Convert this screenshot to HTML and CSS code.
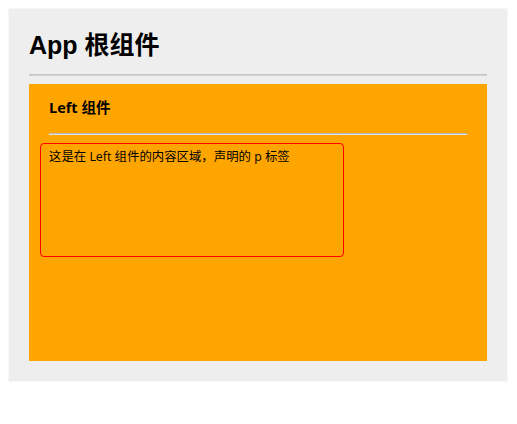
FILE: index.html
```html
<!DOCTYPE html>
<html lang="zh-CN">
<head>
<meta charset="utf-8">
<title>App 根组件</title>
<link rel="stylesheet" href="styles.css">
</head>
<body>
<div class="app">
  <h1 class="app-title">App 根组件</h1>
  <hr class="divider">
  <div class="left">
    <h3 class="left-title">Left 组件</h3>
    <hr class="divider divider-inner">
    <div class="content-box">
      <p class="content-text">这是在 Left 组件的内容区域，声明的 p 标签</p>
    </div>
  </div>
</div>
</body>
</html>
```

FILE: styles.css
```css
html, body {
  background: #fff;
}
body {
  margin: 8px;
  font-family: "Open Sans", "Noto Sans CJK SC", sans-serif;
  color: #000;
}
.app {
  width: 500px;
  box-sizing: border-box;
  background: #eee;
  border: 1px solid #f7f7f7;
  padding: 20px;
}
.app-title {
  margin: 0 0 13px;
  font-family: "Liberation Sans", "Noto Sans CJK SC", sans-serif;
  font-size: 25px;
  line-height: 32px;
  font-weight: bold;
}
.divider {
  height: 0;
  margin: 8px 0;
  border: 0;
  border-top: 1px solid #c4c4c4;
  border-bottom: 1px solid #d4d4d4;
}
.left {
  background: #ffa500;
  height: 277px;
  box-sizing: border-box;
  padding: 14px 11px 0;
}
.left-title {
  margin: 0 0 15px;
  padding-left: 9px;
  font-size: 14.5px;
  line-height: 20px;
  font-weight: bold;
}
.divider-inner {
  margin: 8px 9px;
  border-top-color: #b8b8b8;
  border-bottom-color: #e2e2e2;
}
.content-box {
  width: 304px;
  height: 114px;
  box-sizing: border-box;
  border: 1px solid #f00;
  border-radius: 4px;
  padding: 4px 8px;
}
.content-text {
  margin: 0;
  font-size: 12.4px;
  line-height: 18px;
}
```
